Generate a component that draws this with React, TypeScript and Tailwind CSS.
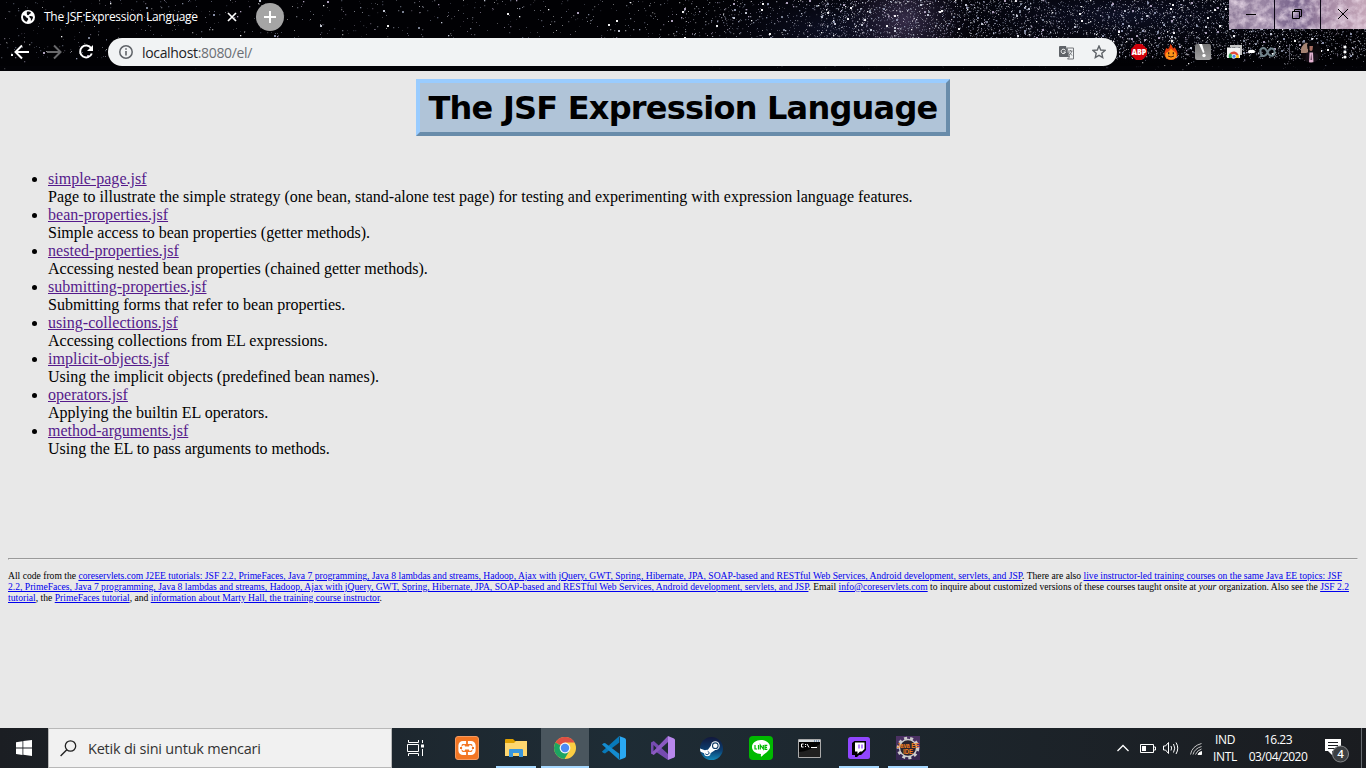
import React from "react";

const UI = "font-['Open_Sans','Noto_Sans',sans-serif]";

function makeStars() {
  let seed = 4217;
  const rnd = () => {
    seed = (seed * 1664525 + 1013904223) % 4294967296;
    return seed / 4294967296;
  };
  const out: { x: number; y: number; s: number; o: number; c: string }[] = [];
  const tints = ["#ffffff", "#c8ccda", "#8f96b0", "#b5a8c4", "#7e8698"];
  while (out.length < 7600) {
    const x = Math.floor(rnd() * 1366);
    const y = Math.floor(rnd() * 70);
    const density = x < 680 ? 0.1 : x < 820 ? 0.32 : x < 960 ? 1 : 0.9;
    if (rnd() > density || (y > 58 && rnd() > 0.12)) continue;
    const r = rnd();
    out.push({
      x,
      y,
      s: r > 0.965 ? 2 : r > 0.6 ? 1.3 : 1,
      o: r > 0.92 ? 0.95 : 0.12 + rnd() * 0.5,
      c: tints[Math.floor(rnd() * tints.length)],
    });
  }
  return out;
}
const stars = makeStars();

function Sky() {
  return (
    <svg className="absolute inset-0" width="1366" height="71" viewBox="0 0 1366 71">
      <defs>
        <radialGradient id="violet">
          <stop offset="0" stopColor="#4c3e62" stopOpacity=".7" />
          <stop offset="1" stopColor="#241c3a" stopOpacity="0" />
        </radialGradient>
        <radialGradient id="navy">
          <stop offset="0" stopColor="#10132c" stopOpacity=".8" />
          <stop offset="1" stopColor="#05060f" stopOpacity="0" />
        </radialGradient>
      </defs>
      <rect width="1366" height="71" fill="#010104" />
      <ellipse cx="830" cy="30" rx="150" ry="60" fill="url(#navy)" />
      <ellipse cx="1120" cy="15" rx="260" ry="50" fill="url(#navy)" />
      <ellipse cx="905" cy="20" rx="65" ry="60" fill="url(#violet)" />
      {stars.map((p, i) => (
        <rect key={i} x={p.x} y={p.y} width={p.s} height={p.s} fill={p.c} opacity={p.o} />
      ))}
      <rect y="66" width="1366" height="5" fill="#020207" opacity=".8" />
    </svg>
  );
}

function WindowButtons() {
  return (
    <svg className="absolute top-0 right-0" width="137" height="29" viewBox="0 0 137 29">
      <defs>
        <linearGradient id="neb" x1="0" x2="1">
          <stop offset="0" stopColor="#8b7896" />
          <stop offset=".25" stopColor="#9a86a4" />
          <stop offset=".5" stopColor="#75618a" />
          <stop offset=".72" stopColor="#a58aa5" />
          <stop offset="1" stopColor="#c4a6b8" />
        </linearGradient>
        <filter id="cloud" x="0" y="0" width="1" height="1">
          <feTurbulence type="fractalNoise" baseFrequency=".12" numOctaves="4" seed="8" />
          <feColorMatrix values="0 0 0 0 .92  0 0 0 0 .8  0 0 0 0 .9  1.6 0 0 0 -.55" />
        </filter>
      </defs>
      <rect width="137" height="29" fill="url(#neb)" />
      <rect width="137" height="29" filter="url(#cloud)" />
      <path d="M45.5 0v29M91.5 0v29" stroke="#0b0714" />
      <path d="M17 14.5h10" stroke="#000" />
      <path d="M63.500 11.500h7v7h-7zM65.500 11.500v-2h7v7h-2" fill="none" stroke="#000" />
      <path d="M109 9l10 10M119 9l-10 10" stroke="#000" fill="none" />
    </svg>
  );
}

function Browser() {
  return (
    <header className={`relative h-[71px] w-full shrink-0 overflow-hidden ${UI}`}>
      <Sky />
      <WindowButtons />
      <div className="relative flex h-[34px] items-center">
        <svg className="ml-[21px] shrink-0" width="14" height="14" viewBox="0 0 14 14">
          <circle cx="7" cy="7" r="7" fill="#fff" />
          <path d="M2 5.500c2 0 2.800.5 3 1.600s2 .6 2.200 1.800c0 1-1 1.300-1.200 2.800C3.500 11.500 1.600 9 2 5.500zM6 1.800c1.600-.4 3-.1 4 .7-.2 1.400-1.400 1-1.900 2-.4 1-2 .9-2.100 0C5.800 3.500 5.600 2.700 6 1.800zM8.300 6.300c1.200-.6 2.500-.3 3.700.4 0 1.700-.7 3.200-2 4.200-.5-.9.300-1.700-.3-2.500-.5-.7-1.500-.9-1.400-2.100z" fill="#08080c" />
        </svg>
        <span className="ml-[9px] w-[170px] whitespace-nowrap text-[12px] tracking-[-0.27px] text-white">The JSF Expression Language</span>
        <svg className="ml-[13px] shrink-0" width="10" height="10" viewBox="0 0 10 10">
          <path d="M1 1l8 8M9 1L1 9" stroke="#fff" strokeWidth="1.7" />
        </svg>
        <svg className="ml-[19px] shrink-0" width="28" height="28" viewBox="0 0 28 28">
          <circle cx="14" cy="14" r="14" fill="#a5a5a5" />
          <path d="M14 8v12M8 14h12" stroke="#fff" strokeWidth="2" />
        </svg>
      </div>
      <div className="relative flex h-[36px] items-center">
        <svg className="ml-[12px] shrink-0" width="84" height="24" viewBox="0 0 84 24">
          <path d="M17 12H4M10 5.500L3.500 12l6.500 6.500" fill="none" stroke="#fff" strokeWidth="2" />
          <path d="M35 12h13M42 5.500l6.500 6.500-6.500 6.500" fill="none" stroke="#69696c" strokeWidth="2" />
          <path d="M79.200 8.200A6 6 0 1 0 79.800 13.500" fill="none" stroke="#fff" strokeWidth="2" />
          <path d="M81 5v6h-6z" fill="#fff" />
        </svg>
        <div className="ml-[12px] flex h-[28px] w-[1009px] shrink-0 items-center rounded-full bg-[#f1f3f4]">
          <svg className="ml-[11px] shrink-0" width="14" height="14" viewBox="0 0 14 14">
            <circle cx="7" cy="7" r="6.200" fill="none" stroke="#5f6368" strokeWidth="1.500" />
            <path d="M7 6v4.500M7 3.300v1.500" stroke="#5f6368" strokeWidth="1.600" />
          </svg>
          <span className="ml-[9px] grow whitespace-nowrap text-[14px] tracking-[-0.33px] text-[#6b6f74]">
            <span className="text-[#202124]">localhost</span>:8080/el/
          </span>
          <svg className="mr-[18px] shrink-0" width="15" height="15" viewBox="0 0 15 15">
            <path d="M0 2q0-1 1-1h6l3 11H1q-1 0-1-1z" fill="#5f6368" />
            <path d="M8 3h6.500v11H8.500l2-2z" fill="#f1f3f4" stroke="#74777b" />
            <path d="M6.400 5.500A2.200 2.200 0 1 0 6.500 7H4.600" fill="none" stroke="#fff" />
            <path d="M9.500 6h4M11.500 5v1M12.800 6c-.4 2-1.400 3-2.800 4M10.500 7.500l2.500 3" fill="none" stroke="#6b6e72" strokeWidth=".9" />
          </svg>
          <svg className="mr-[11px] shrink-0" width="14" height="14" viewBox="0 0 14 14">
            <path d="M7 1l1.700 4 4.300.4-3.200 2.900.9 4.200L7 10.300l-3.700 2.200.9-4.200L1 5.400 5.300 5z" fill="none" stroke="#5f6368" strokeWidth="1.400" />
          </svg>
        </div>
        <svg className="ml-[14px] shrink-0" width="16" height="16" viewBox="0 0 16 16">
          <path d="M5 0h6l5 5v6l-5 5H5l-5-5V5z" fill="#d0000a" />
          <text x="8" y="11" textAnchor="middle" textLength="14.500" lengthAdjust="spacingAndGlyphs" fontFamily="Open Sans" fontSize="8" fontWeight="800" fill="#fff">ABP</text>
        </svg>
        <svg className="ml-[17px] shrink-0" width="14" height="16" viewBox="0 0 14 16">
          <path d="M6 0c3 2 2 3 3.500 4.500L11 3c0 2 3 4 2.500 7.500S10 16 7 16 .8 14 .5 10.500 2 6 2 4l2 1C5.500 4 6 2 6 0z" fill="#e8400c" />
          <path d="M7 4.500c1 2.500 5.500 2.500 5.500 6.500s-3 4.500-5.500 4.500S1.500 14.500 1.500 11s3.500-2.500 5.500-6.500z" fill="#fe9519" />
          <path d="M4 8.200h1.300v2H4zM8.700 8.200H10v2H8.700z" fill="#48200c" /><path d="M4 12q3 2 6 0" fill="none" stroke="#48200c" />
        </svg>
        <svg className="ml-[17px] shrink-0" width="16" height="16" viewBox="0 0 16 16">
          <defs><linearGradient id="gr" x2="0" y2="1"><stop stopColor="#777" /><stop offset="1" stopColor="#a0a0a0" /></linearGradient></defs>
          <rect width="16" height="16" rx="2" fill="url(#gr)" />
          <path d="M4 0l4 9 1.500-.8L7 0z" fill="#fff" /><circle cx="9" cy="11.500" r="1.700" fill="#fff" />
        </svg>
        <svg className="ml-[16px] shrink-0" width="15" height="14" viewBox="0 0 15 14">
          <path d="M3 0h12v10h-2V2H3z" fill="#c4c4c4" />
          <path d="M0 2.500h13V13H0z" fill="#f2f2f2" />
          <path d="M2 13a5 5 0 0 1 1.500-5.500L7 13z" fill="#31a853" />
          <path d="M2.800 8.500a5 5 0 0 1 8.800 1.500H7z" fill="#df4937" />
          <path d="M7 10h4.600q.6 1.500.2 3H7z" fill="#fbbf12" /><circle cx="7" cy="11.300" r="2" fill="#4688f1" stroke="#fff" strokeWidth=".7" />
        </svg>
        <span className="ml-[6px] h-[3px] w-[7px] shrink-0 -translate-y-px rounded-full bg-white" />
        <svg className="ml-[4px] shrink-0" width="17" height="12" viewBox="0 0 17 12">
          <path d="M5.500 10H1.200M3.500 9.500C.5 8 .3 2 4.500 2 8.500 2 8 9.800 12.300 9.800c4.500 0 4.500-7.300 0-7.300C8.500 2.500 9 9.800 5 10" fill="none" stroke="#71848b" strokeWidth="1.900" />
        </svg>
        <span className="ml-[13px] h-4 w-px shrink-0 bg-[#555560]" />
        <svg className="ml-[11px] shrink-0" width="20" height="22" viewBox="0 0 20 22">
          <defs><clipPath id="av"><circle cx="10" cy="11" r="10.500" /></clipPath></defs>
          <g clipPath="url(#av)">
            <path d="M0 0h20v22H0z" fill="#0c080b" /><path d="M0 2h7v10H0z" fill="#a58473" />
            <path d="M6 4q1-4 5-3.500 4 0 4 4.500l-1 3H6.500z" fill="#080609" /><path d="M8.500 5h3.500l-.5 4q-1.500 2-3 0z" fill="#a86f62" />
            <path d="M5 12l4-1.500h3l5 3V22H4z" fill="#171018" /><path d="M8.500 11.500H12l.5 10.500H8z" fill="#e4b4d2" /><path d="M10.300 12l-.8 7h1.400z" fill="#5c4054" />
          </g>
        </svg>
        <svg className="ml-[22px] shrink-0" width="4" height="14" viewBox="0 0 4 14">
          <circle cx="2" cy="2" r="1.600" fill="#fff" /><circle cx="2" cy="7" r="1.600" fill="#fff" /><circle cx="2" cy="12" r="1.600" fill="#fff" />
        </svg>
      </div>
    </header>
  );
}

const items = [
  ["simple-page.jsf", "Page to illustrate the simple strategy (one bean, stand-alone test page) for testing and experimenting with expression language features."],
  ["bean-properties.jsf", "Simple access to bean properties (getter methods)."],
  ["nested-properties.jsf", "Accessing nested bean properties (chained getter methods)."],
  ["submitting-properties.jsf", "Submitting forms that refer to bean properties."],
  ["using-collections.jsf", "Accessing collections from EL expressions."],
  ["implicit-objects.jsf", "Using the implicit objects (predefined bean names)."],
  ["operators.jsf", "Applying the builtin EL operators."],
  ["method-arguments.jsf", "Using the EL to pass arguments to methods."],
];

function A({ children }: { children: React.ReactNode }) {
  return <a className="text-[#0000ee] underline">{children}</a>;
}

function Page() {
  return (
    <main className="flex grow flex-col bg-[#e8e8e8] px-2 font-['Liberation_Serif',serif] text-black">
      <h1 className="mt-2 flex h-[57px] w-[534px] items-center justify-center self-center whitespace-nowrap border-4 border-t-[#99ccff] border-r-[#698caa] border-b-[#698caa] border-l-[#99ccff] bg-[#b0c4d8] pt-[2px] font-['DejaVu_Sans',sans-serif] text-[32px] leading-[47px] font-bold tracking-[-0.78px]">
        The JSF Expression Language
      </h1>
      <ul className="mt-[34px] h-[388px] list-disc pl-10 text-[16px] leading-[18px]">
        {items.map(([name, text]) => (
          <li key={name}>
            <a className="tracking-[0.03px] text-[#551a8b] underline">{name}</a>
            <br />
            <span className="whitespace-nowrap">{text}</span>
          </li>
        ))}
      </ul>
      <hr className="h-[2px] border border-t-[#9a9a9a] border-r-[#eee] border-b-[#eee] border-l-[#9a9a9a]" />
      <div className="mt-[10px] text-[9.6px] leading-[11px] tracking-[0.004px] whitespace-nowrap">
        <p>All code from the <A>coreservlets.com J2EE tutorials: JSF 2.2, PrimeFaces, Java 7 programming, Java 8 lambdas and streams, Hadoop, Ajax with jQuery, GWT, Spring, Hibernate, JPA, SOAP-based and RESTful Web Services, Android development, servlets, and JSP</A>. There are also <A>live instructor-led training courses on the same Java EE topics: JSF</A></p>
        <p><A>2.2, PrimeFaces, Java 7 programming, Java 8 lambdas and streams, Hadoop, Ajax with jQuery, GWT, Spring, Hibernate, JPA, SOAP-based and RESTful Web Services, Android development, servlets, and JSP</A>. Email <A>info@coreservlets.com</A> to inquire about customized versions of these courses taught onsite at <i>your</i> organization. Also see the <A>JSF 2.2</A></p>
        <p><A>tutorial</A>, the <A>PrimeFaces tutorial</A>, and <A>information about Marty Hall, the training course instructor</A>.</p>
      </div>
    </main>
  );
}

function Cell({ children, open, active }: { children: React.ReactNode; open?: boolean; active?: boolean }) {
  return (
    <div className="flex w-[49px] shrink-0 justify-center">
      <div className={`flex h-10 flex-col items-center ${active ? "w-12 bg-[#4a565e]" : "w-10"}`}>
        <div className="flex h-[38px] items-center pt-[2px]">{children}</div>
        {(open || active) && <div className="h-[2px] w-full bg-[#a6d8ff]" />}
      </div>
    </div>
  );
}

function Taskbar() {
  return (
    <footer className={`flex h-10 w-full shrink-0 items-center bg-linear-to-r from-[#1b1e23] via-[#1e2c35] via-45% to-[#1a1c20] text-white ${UI}`}>
      <svg className="ml-4 shrink-0" width="16" height="16" viewBox="0 0 16 16">
        <path d="M0 2.200L6.500 1.200V7.600H0zM7.300 1.100L16 0v7.600H7.300zM0 8.400h6.500v6.500L0 13.900zM7.300 8.400H16V16l-8.700-1.200z" fill="#fff" />
      </svg>
      <div className="ml-4 flex h-10 w-[344px] shrink-0 items-center border border-[#b8b8b8] bg-[#f1f1f1]">
        <svg className="ml-[11px] shrink-0" width="17" height="17" viewBox="0 0 17 17">
          <circle cx="10.500" cy="6" r="5.200" fill="none" stroke="#222" strokeWidth="1.300" /><path d="M6.800 9.800L.6 16" stroke="#222" strokeWidth="1.400" />
        </svg>
        <span className="ml-[11px] whitespace-nowrap pt-px text-[14.5px] tracking-[-0.22px] text-[#333]">Ketik di sini untuk mencari</span>
      </div>
      <div className="mr-[3px] flex w-[47px] shrink-0 justify-center">
        <svg width="17" height="16" viewBox="0 0 17 16">
          <path d="M1.500 0v2.500h10V0M1.500 16v-2.500h10V16M.5 4.500h11v7H.5zM15.500 0v3M15.500 9v7" fill="none" stroke="#fff" /><path d="M14 4.500h3v3h-3z" fill="#fff" />
        </svg>
      </div>
      <Cell>
        <svg width="24" height="24" viewBox="0 0 24 24">
          <rect x=".5" y=".5" width="23" height="23" rx="2.500" fill="#f37623" stroke="#f49a60" />
          <rect x="5" y="6.500" width="14" height="11" rx="3" fill="none" stroke="#fff" strokeWidth="3.200" />
          <path d="M5 12h14" stroke="#f37623" strokeWidth="2" />
          <path d="M8 9.500q1.500 2.500 0 5M16 9.500q-1.500 2.500 0 5M9 12h6" fill="none" stroke="#fff" strokeWidth="3" />
          <path d="M12 4v4M12 16v4" stroke="#f37623" strokeWidth="1.800" />
        </svg>
      </Cell>
      <Cell open>
        <svg width="22" height="19" viewBox="0 0 22 19">
          <path d="M0 1q0-1 1-1h7l2 2h12v4H0z" fill="#dfa000" /><path d="M0 4h9l2-2h11v15H0z" fill="#fed66f" />
          <path d="M4 18v-7q0-1 1-1h12q1 0 1 1v7h-4v-4H8v4z" fill="#3a96dc" />
        </svg>
      </Cell>
      <Cell active>
        <svg width="22" height="22" viewBox="0 0 22 22">
          <circle cx="11" cy="11" r="11" fill="#fccd42" />
          <path d="M11 11L1.500 5.500A11 11 0 0 1 20.600 5.500H11z" fill="#de4f44" />
          <path d="M1.500 5.500A11 11 0 0 0 10.500 22l5-8.500L11 11z" fill="#1da462" />
          <circle cx="11" cy="11" r="5.400" fill="#f5f5f5" /><circle cx="11" cy="11" r="4.200" fill="#4b8af4" />
        </svg>
      </Cell>
      <Cell>
        <svg width="24" height="24" viewBox="0 0 24 24">
          <path d="M17.300 0v6.500L3 17.500 1 16.700 0 15.500z" fill="#0879b9" /><path d="M0 8.500l1.500-1.300 1.500-.2 14.300 10.700V24z" fill="#148cd0" />
          <path d="M17 0l5.500 2q1.500.7 1.500 2v16q0 1.300-1.500 2L17 24q1-.7 1-2V2q0-1.300-1-2z" fill="#2aa8f2" />
        </svg>
      </Cell>
      <Cell>
        <svg width="24" height="24" viewBox="0 0 24 24">
          <path d="M0 6.500L2.800 5 17 18v6L3 14.500v4L0 17.300z" fill="#764bb1" /><path d="M2.800 19L0 17.500 17 0v6z" fill="#8b5ac2" />
          <path d="M2.500 9l3 3-3 3z" fill="#1d2932" /><path d="M17 0l6 2.500q1 .5 1 1.500v16q0 1-1 1.500L17 24z" fill="#b887ec" />
        </svg>
      </Cell>
      <Cell>
        <svg width="23" height="23" viewBox="0 0 23 23">
          <defs>
            <linearGradient id="st" x2="0" y2="1"><stop stopColor="#12183c" /><stop offset=".6" stopColor="#0b4073" /><stop offset="1" stopColor="#1387b8" /></linearGradient>
            <clipPath id="sc"><circle cx="11.500" cy="11.500" r="11.500" /></clipPath>
          </defs>
          <g clipPath="url(#sc)">
            <path d="M0 0h23v23H0z" fill="url(#st)" />
            <path d="M0 11.500l7 2.500 4-5.500 8 2-9 6-3 1-7-3z" fill="#fff" />
            <circle cx="15.300" cy="8.700" r="4.400" fill="#fff" /><circle cx="15.300" cy="8.700" r="2.800" fill="#fff" stroke="#17406a" strokeWidth="1.100" />
            <circle cx="7.300" cy="16" r="3.200" fill="#fff" /><path d="M5.200 16.800q2 1.800 3.500.2t-1-2.700" fill="none" stroke="#0b4073" strokeWidth=".9" />
          </g>
        </svg>
      </Cell>
      <Cell>
        <svg width="24" height="24" viewBox="0 0 24 24">
          <rect width="24" height="24" rx="4" fill="#00b900" />
          <path d="M12 4c5 0 9 3 9 7 0 3-3 5-8.500 9.500-.7.500-.8-.3-.5-2.500-5 0-9-3-9-7s4-7 9-7z" fill="#fff" />
          <path d="M6 9v4h2M9.500 9v4.500M11.300 13.500V9l3 4V9M18.300 9.300H16v4h2.300M16 11.300h2" fill="none" stroke="#00b900" strokeWidth="1.200" />
        </svg>
      </Cell>
      <Cell>
        <svg width="23" height="19" viewBox="0 0 23 19">
          <path d="M.5.5h22v18H.5z" fill="#030303" stroke="#aaa" /><path d="M1 1h21v2H1z" fill="#d5dadd" />
          <path d="M1 13Q11 12 22 5v13H1z" fill="#202020" />
          <path d="M16 2h1M18 2h1M20 2h1" stroke="#345f91" />
          <path d="M5.500 5H3.500v3h2M7.500 5v1M7.500 7v1M9 5l2 3.500M13 8.500h6" stroke="#fff" fill="none" />
        </svg>
      </Cell>
      <Cell open>
        <svg width="22" height="22" viewBox="0 0 22 22">
          <rect width="22" height="22" rx="2.500" fill="#9146ff" /><path d="M4 6l2.500-2H18v9l-5 5h-2l-2 2H7v-2H4z" fill="#000" />
          <path d="M7 5.500h9.500V12L14 14.500h-2L9.500 17v-2.500H7z" fill="#fff" /><path d="M11 7.500v4M14 7.500v4" stroke="#9146ff" strokeWidth="1.300" />
        </svg>
      </Cell>
      <Cell open>
        <svg width="24" height="24" viewBox="0 0 24 24">
          <path d="M0 0h24v24H0z" fill="#4b3163" /><path d="M0 12h24v12H0z" fill="#352650" />
          <circle cx="12" cy="12" r="9.800" fill="none" stroke="#ccc" strokeWidth="3" strokeDasharray="3 3" /><circle cx="12" cy="12" r="8.500" fill="#29232e" stroke="#d0d0d0" strokeWidth="1.300" />
          <text x="1" y="11.500" textLength="22" lengthAdjust="spacingAndGlyphs" fontFamily="Liberation Sans" fontSize="7" fontWeight="700" fill="#f5811f">Java EE</text>
          <text x="7" y="18" textLength="10" lengthAdjust="spacingAndGlyphs" fontFamily="Liberation Sans" fontSize="7" fontWeight="700" fill="#f5811f">IDE</text>
        </svg>
      </Cell>
      <div className="ml-auto flex h-10 shrink-0 items-center">
        <svg width="86" height="16" viewBox="0 0 86 16" fill="none" stroke="#fff">
          <path d="M.5 11L6 5.500l5.500 5.500" strokeWidth="1.300" />
          <path d="M23.500 4.500h13v8h-13zM37 7h1.500v3H37" /><path d="M25 6h4v5h-4z" fill="#fff" stroke="none" />
          <path d="M46.500 6h2l3-3.500v11l-3-3.500h-2zM54 6q1.200 2 0 4.500M56.500 4q2.500 4 0 8.500M59 2.500q3.500 5.500 0 11.500" />
          <path d="M73.500 14.500Q75 6 84.500 3.500M76 14.500Q77.500 8.500 84.500 6.500M78.500 14.500q1.500-4 6-5.500" stroke="#c4c4c4" /><path d="M81 14.500q.5-2 3.500-3v3z" fill="#fff" />
        </svg>
        <div className="ml-[7px] w-[30px] text-center text-[12px] leading-[17px] tracking-[-0.35px]">
          <div>IND</div><div>INTL</div>
        </div>
        <div className="ml-[4px] w-[68px] text-center text-[12px] leading-[17px] tracking-[-0.5px]">
          <div>16.23</div><div>03/04/2020</div>
        </div>
        <svg className="mt-1 ml-[13px]" width="24" height="26" viewBox="0 0 24 26">
          <path d="M0 2h16v12H7v4l-4-4H0z" fill="#fff" /><path d="M3 5.500h10M3 8.500h10M3 11.500h7" stroke="#1b1d21" />
          <circle cx="15.500" cy="17" r="8" fill="#3d4043" stroke="#85878a" />
          <text x="15.500" y="21" textAnchor="middle" fontFamily="Open Sans" fontSize="11.500" fontWeight="600" fill="#fff">4</text>
        </svg>
        <div className="mr-1 ml-[12px] h-10 w-px bg-[#666b70]" />
      </div>
    </footer>
  );
}

export default function App() {
  return (
    <div className="flex h-[768px] w-[1366px] flex-col overflow-hidden bg-[#e8e8e8]">
      <Browser />
      <Page />
      <Taskbar />
    </div>
  );
}
